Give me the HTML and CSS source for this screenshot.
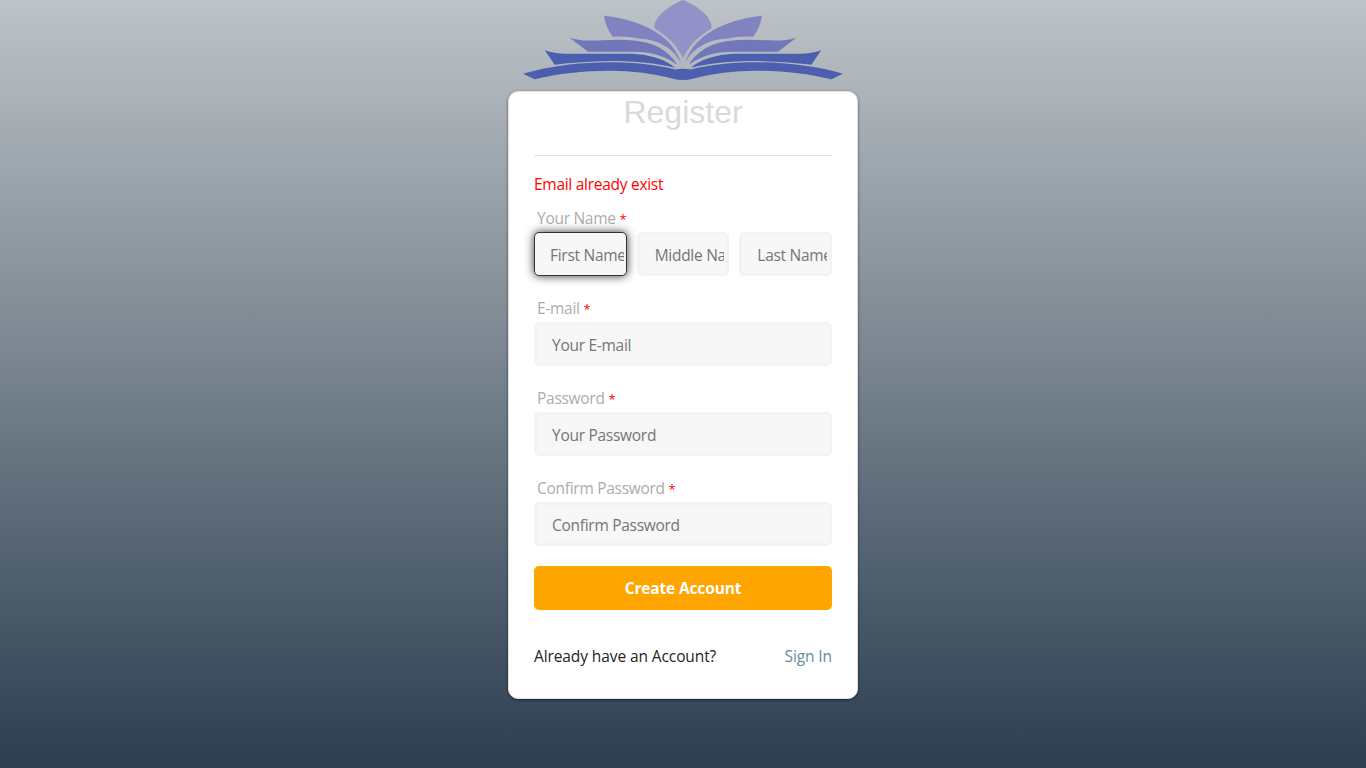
FILE: index.html
```html
<!DOCTYPE html>
<html lang="en">
<head>
<meta charset="utf-8">
<title>Register</title>
<link rel="stylesheet" href="styles.css">
</head>
<body>
<svg class="logo" viewBox="0 0 320 80" width="320" height="80" aria-hidden="true">
  <defs>
    <g id="pages">
      <path fill="#8183c1" d="M81 15.7C103 18 124 25 138 35.5C148 43 155 53 158 63C151 50 138 40 117 38.8Q104 36 89.7 36.7Q83 28 81 15.7Z"/>
      <path fill="#7277b9" d="M46.7 37.7Q55 40.5 66 40.5C82 40.5 106 37.5 125 43C139 47 149 56 154 64.5C145 58 132 51.7 110 51.7H65Z"/>
      <path fill="#4c5faf" d="M21.7 50.3Q31 53.7 43 53.7H104C126 53.5 144 60 152 67.8C136 63.5 112 61 87 61Q57 61.5 31.7 64.7Z"/>
      <path fill="#4c5faf" d="M0 73.7C28 66 56 62.3 87 62.3C112 62.3 135 65 152 69.5Q156 68.7 160.2 68.7V80Q155 80 149 78.5C131 73.5 109 70.7 87 70.7C60 70.7 36 73.5 11.7 79.3Z"/>
    </g>
  </defs>
  <path fill="#9291c8" d="M160 0C173 5 190 17 188.5 28.5C174 37 165 47 160 58C155 47 146 37 131.5 28.5C130 17 147 5 160 0Z"/>
  <use href="#pages"/>
  <use href="#pages" transform="translate(320 0) scale(-1 1)"/>
</svg>
<main class="card">
  <h1 class="title">Register</h1>
  <hr class="rule">
  <p class="error">Email already exist</p>
  <form class="form">
    <div class="field">
      <label class="label" for="first">Your Name <span class="req">*</span></label>
      <div class="names">
        <input class="input input-active" id="first" type="text" placeholder="First Name">
        <input class="input" type="text" placeholder="Middle Name">
        <input class="input" type="text" placeholder="Last Name">
      </div>
    </div>
    <div class="field">
      <label class="label" for="email">E-mail <span class="req">*</span></label>
      <input class="input" id="email" type="email" placeholder="Your E-mail">
    </div>
    <div class="field">
      <label class="label" for="password">Password <span class="req">*</span></label>
      <input class="input" id="password" type="password" placeholder="Your Password">
    </div>
    <div class="field">
      <label class="label" for="confirm">Confirm Password <span class="req">*</span></label>
      <input class="input" id="confirm" type="password" placeholder="Confirm Password">
    </div>
    <button class="submit" type="button">Create Account</button>
  </form>
  <div class="footer">
    <span class="question">Already have an Account?</span>
    <a class="signin" href="#">Sign In</a>
  </div>
</main>
</body>
</html>
```
FILE: styles.css
```css
* { box-sizing: border-box; }
html { height: 100%; }
body {
  margin: 0;
  height: 100%;
  overflow: hidden;
  display: flex;
  flex-direction: column;
  align-items: center;
  background: linear-gradient(to bottom, #bdc3c7, #2c3e50);
  font: 15.5px/24px "Segoe UI", "Open Sans", "Noto Sans", sans-serif;
  letter-spacing: -.28px;
  color: #212529;
}
.logo { display: block; flex: none; }
.card {
  flex: none;
  width: 350px;
  height: 608px;
  margin-top: 11px;
  padding: 0 25px;
  background: #fff;
  border: 1px solid #dfdfdf;
  border-radius: 10px;
  box-shadow: 0 1px 3px rgba(0, 0, 0, .5);
}
.title {
  margin: 0;
  padding-top: 1px;
  font: 400 32px/38px "Liberation Sans", Arial, sans-serif;
  letter-spacing: 0;
  text-align: center;
  color: #d9d9d9;
}
.rule {
  margin: 24px 0 16px;
  border: 0;
  border-top: 1px solid #e3e3e3;
}
.error { margin: 0 0 10px; color: #f00; }
.form { display: flex; flex-direction: column; }
.field { height: 90px; }
.label {
  display: block;
  height: 26px;
  padding-left: 3px;
  color: #acacac;
}
.req { color: #f00; font-size: 13px; line-height: 1; }
.names {
  display: grid;
  grid-template-columns: repeat(3, minmax(0, 1fr));
  gap: 10px;
}
.input {
  display: block;
  width: 100%;
  height: 44px;
  padding: 3px 2px 1px 15px;
  border: 3px solid #f3f3f3;
  border-radius: 5px;
  background: #f7f7f7;
  font: inherit;
  letter-spacing: inherit;
  outline: none;
}
.input::placeholder { color: #757575; opacity: 1; }
.input-active {
  border: 1px solid #333;
  box-shadow: 0 0 10px #333;
}
.submit {
  height: 44px;
  padding: 0;
  border: 0;
  border-radius: 5px;
  background: #ffa500;
  color: #fff;
  font: inherit;
  font-weight: 700;
  letter-spacing: -.15px;
}
.footer {
  display: flex;
  justify-content: space-between;
  margin-top: 34px;
  letter-spacing: -.1px;
}
.signin { color: #648c9c; text-decoration: none; }
```
